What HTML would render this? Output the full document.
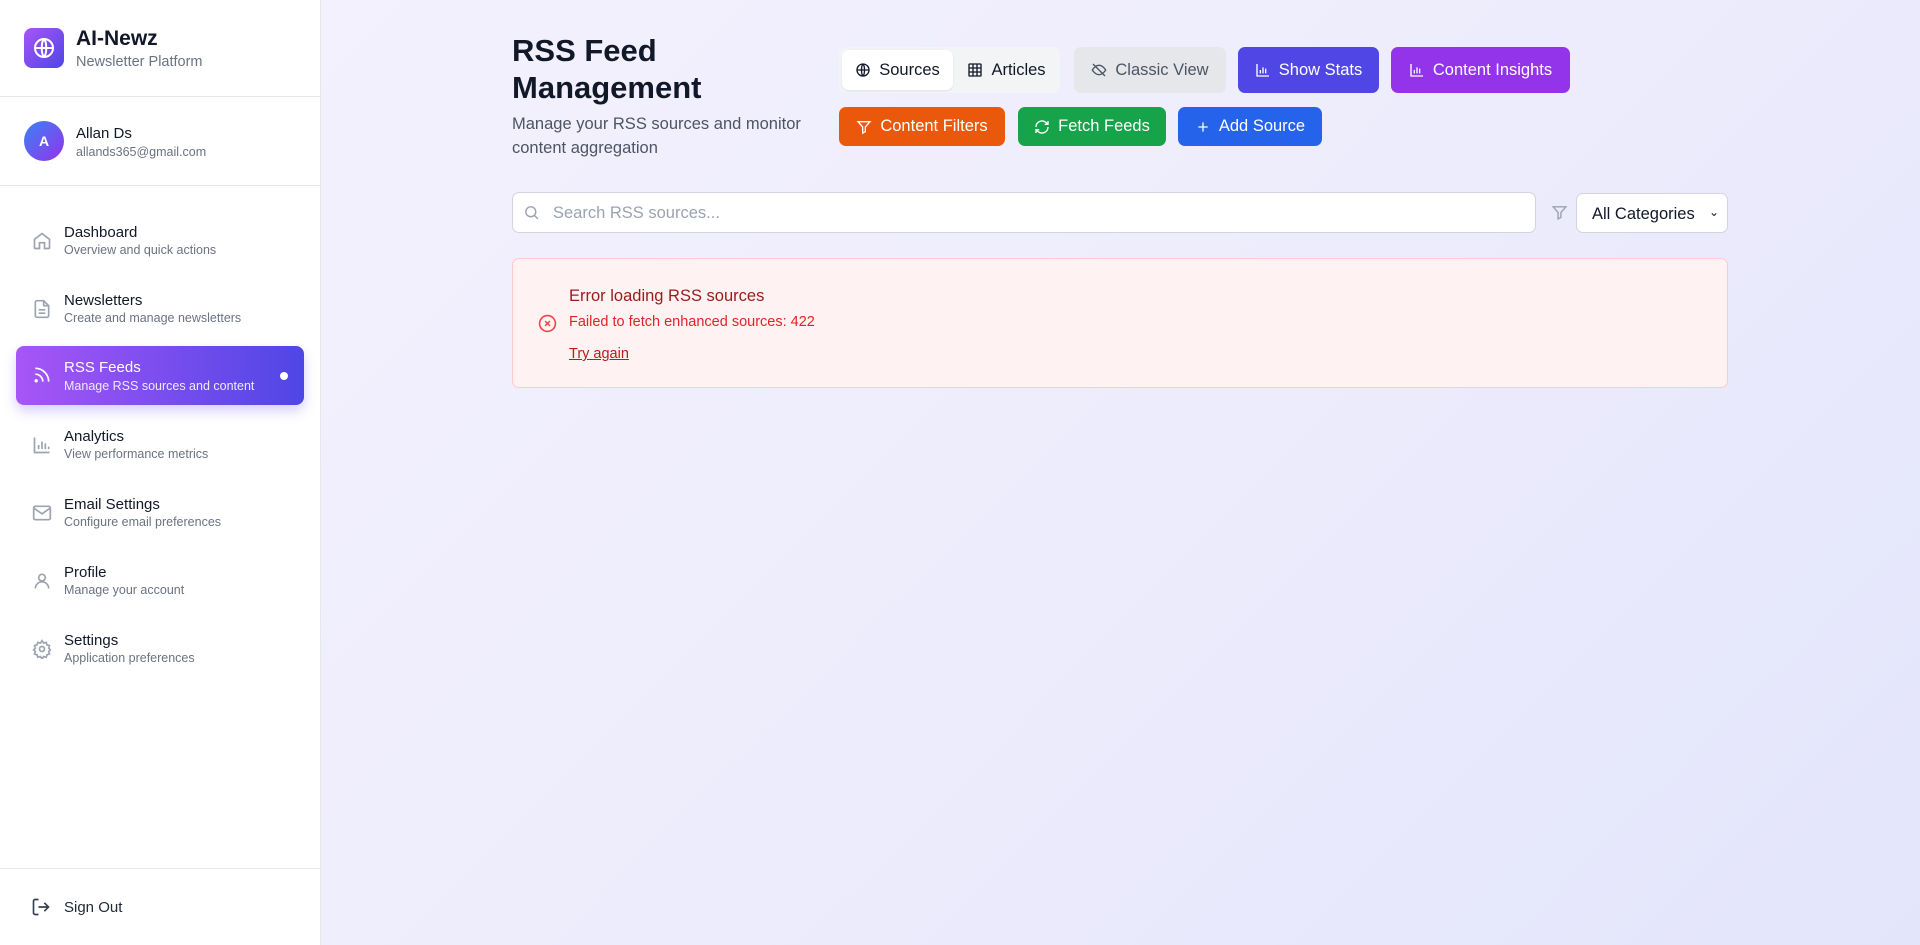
<!DOCTYPE html>
<html><head><meta charset="utf-8"><style>
*{box-sizing:border-box;margin:0;padding:0}
body{width:1920px;height:945px;overflow:hidden;font-family:"Liberation Sans",sans-serif;background:linear-gradient(135deg,#f5f2fe 0%,#eeedfc 50%,#e3e5fb 100%);position:relative;color:#111827}
.sb{position:absolute;left:0;top:0;width:321px;height:945px;background:#fff;border-right:1px solid #e5e7eb}
.abs{position:absolute}
.hr{position:absolute;left:0;width:320px;height:1px;background:#e5e7eb}
.nav{position:absolute;left:16px;width:288px;height:59px}
.nav .t{position:absolute;left:48px;top:12px;font-size:15px;color:#111827}
.nav .s{position:absolute;left:48px;top:31px;font-size:12.5px;color:#6b7280}
.nav svg{position:absolute;left:16px;top:19px}
.btn{position:absolute;height:46px;border-radius:7px;display:flex;align-items:center;justify-content:center;gap:8px;font-size:16.5px;color:#fff}
.b2{height:39px;top:107px}
</style></head><body>
<div class="sb">
 <div class="abs" style="left:24px;top:28px;width:40px;height:40px;border-radius:8px;background:linear-gradient(135deg,#a855f7,#4f46e5);display:flex;align-items:center;justify-content:center">
  <svg width="24" height="24" viewBox="0 0 24 24" fill="none" stroke="#fff" stroke-width="2"><circle cx="12" cy="12" r="9"/><path d="M3 12h18M12 3c3 3 3 15 0 18M12 3c-3 3-3 15 0 18"/></svg></div>
 <div class="abs" style="left:76px;top:27px;font-size:21px;font-weight:bold">AI-Newz</div>
 <div class="abs" style="left:76px;top:54px;font-size:14.5px;color:#6b7280">Newsletter Platform</div>
 <div class="hr" style="top:96px"></div>
 <div class="abs" style="left:24px;top:121px;width:40px;height:40px;border-radius:50%;background:linear-gradient(135deg,#3b82f6,#9333ea);color:#fff;font-weight:bold;font-size:14px;display:flex;align-items:center;justify-content:center">A</div>
 <div class="abs" style="left:76px;top:125px;font-size:15px">Allan Ds</div>
 <div class="abs" style="left:76px;top:145px;font-size:12.5px;color:#6b7280">allands365@gmail.com</div>
 <div class="hr" style="top:185px"></div>

 <div class="nav" style="top:212px"><svg width="20" height="20" viewBox="0 0 24 24" fill="none" stroke="#9ca3af" stroke-width="2"><path d="M3 10l9-7 9 7v10a1 1 0 0 1-1 1h-5v-7H9v7H4a1 1 0 0 1-1-1z"/></svg><div class="t">Dashboard</div><div class="s">Overview and quick actions</div></div>
 <div class="nav" style="top:280px"><svg width="20" height="20" viewBox="0 0 24 24" fill="none" stroke="#9ca3af" stroke-width="2"><path d="M14 2H6a2 2 0 0 0-2 2v16a2 2 0 0 0 2 2h12a2 2 0 0 0 2-2V8z"/><path d="M14 2v6h6M8 13h8M8 17h8"/></svg><div class="t">Newsletters</div><div class="s">Create and manage newsletters</div></div>
 <div class="nav" style="top:346px;border-radius:8px;background:linear-gradient(90deg,#a855f7,#4f46e5);box-shadow:0 6px 12px rgba(99,70,230,.25)"><svg width="20" height="20" viewBox="0 0 24 24" fill="none" stroke="#fff" stroke-width="2"><path d="M4 11a9 9 0 0 1 9 9M4 4a16 16 0 0 1 16 16"/><circle cx="5" cy="19" r="1"/></svg><div class="t" style="color:#fff;top:13px">RSS Feeds</div><div class="s" style="color:#ede9fe;top:33px">Manage RSS sources and content</div><div class="abs" style="right:16px;top:26px;width:8px;height:8px;border-radius:50%;background:#fff"></div></div>
 <div class="nav" style="top:416px"><svg width="20" height="20" viewBox="0 0 24 24" fill="none" stroke="#9ca3af" stroke-width="2"><path d="M3 3v18h18M8 17v-5M12 17V8M16 17v-7M20 17v-3"/></svg><div class="t">Analytics</div><div class="s">View performance metrics</div></div>
 <div class="nav" style="top:484px"><svg width="20" height="20" viewBox="0 0 24 24" fill="none" stroke="#9ca3af" stroke-width="2"><rect x="2" y="4" width="20" height="16" rx="2"/><path d="M2 6l10 7 10-7"/></svg><div class="t">Email Settings</div><div class="s">Configure email preferences</div></div>
 <div class="nav" style="top:552px"><svg width="20" height="20" viewBox="0 0 24 24" fill="none" stroke="#9ca3af" stroke-width="2"><circle cx="12" cy="8" r="4"/><path d="M4 21a8 8 0 0 1 16 0"/></svg><div class="t">Profile</div><div class="s">Manage your account</div></div>
 <div class="nav" style="top:620px"><svg width="20" height="20" viewBox="0 0 24 24" fill="none" stroke="#9ca3af" stroke-width="2"><circle cx="12" cy="12" r="3"/><path d="M12 2l2 3 3-1 1 3 3 1-1 3 2 2-2 2 1 3-3 1-1 3-3-1-2 3-2-3-3 1-1-3-3-1 1-3-2-2 2-2-1-3 3-1 1-3 3 1z"/></svg><div class="t">Settings</div><div class="s">Application preferences</div></div>

 <div class="hr" style="top:868px"></div>
 <svg class="abs" style="left:31px;top:897px" width="20" height="20" viewBox="0 0 24 24" fill="none" stroke="#374151" stroke-width="2"><path d="M9 21H5a2 2 0 0 1-2-2V5a2 2 0 0 1 2-2h4M16 17l5-5-5-5M21 12H9"/></svg>
 <div class="abs" style="left:64px;top:899px;font-size:15px;color:#1f2937">Sign Out</div>
</div>

<div class="abs" style="left:512px;top:32px;font-size:31px;font-weight:bold;line-height:37px;color:#111827">RSS Feed<br>Management</div>
<div class="abs" style="left:512px;top:112px;font-size:16.5px;line-height:24px;color:#4b5563">Manage your RSS sources and monitor<br>content aggregation</div>

<div class="abs" style="left:839px;top:47px;width:221px;height:46px;border-radius:7px;background:#f3f4f6"></div>
<div class="btn" style="left:842px;top:50px;width:111px;height:40px;background:#fff;color:#111827;box-shadow:0 1px 2px rgba(0,0,0,.08)"><svg width="16" height="16" viewBox="0 0 24 24" fill="none" stroke="#111827" stroke-width="2"><circle cx="12" cy="12" r="9"/><path d="M3 12h18M12 3c3 3 3 15 0 18M12 3c-3 3-3 15 0 18"/></svg>Sources</div>
<div class="btn" style="left:955px;top:50px;width:103px;height:40px;color:#111827"><svg width="16" height="16" viewBox="0 0 24 24" fill="none" stroke="#111827" stroke-width="2"><rect x="3" y="3" width="18" height="18" rx="1"/><path d="M3 9h18M3 15h18M9 3v18M15 3v18"/></svg>Articles</div>
<div class="btn" style="left:1074px;top:47px;width:152px;background:#e5e7eb;color:#4b5563"><svg width="16" height="16" viewBox="0 0 24 24" fill="none" stroke="#4b5563" stroke-width="2"><path d="M2 12s4-7 10-7 10 7 10 7-4 7-10 7S2 12 2 12z"/><path d="M3 3l18 18"/></svg>Classic View</div>
<div class="btn" style="left:1238px;top:47px;width:141px;background:#4f46e5"><svg width="16" height="16" viewBox="0 0 24 24" fill="none" stroke="#fff" stroke-width="2"><path d="M3 3v18h18M8 17v-5M12 17V8M16 17v-7"/></svg>Show Stats</div>
<div class="btn" style="left:1391px;top:47px;width:179px;background:#9333ea"><svg width="16" height="16" viewBox="0 0 24 24" fill="none" stroke="#fff" stroke-width="2"><path d="M3 3v18h18M8 17v-5M12 17V8M16 17v-7"/></svg>Content Insights</div>
<div class="btn b2" style="left:839px;width:166px;background:#ea580c"><svg width="16" height="16" viewBox="0 0 24 24" fill="none" stroke="#fff" stroke-width="2"><path d="M3 4h18l-7 8v7l-4 2v-9z"/></svg>Content Filters</div>
<div class="btn b2" style="left:1018px;width:148px;background:#16a34a"><svg width="16" height="16" viewBox="0 0 24 24" fill="none" stroke="#fff" stroke-width="2"><path d="M21 12a9 9 0 0 1-15 6.7L3 16M3 12a9 9 0 0 1 15-6.7L21 8M21 3v5h-5M3 21v-5h5"/></svg>Fetch Feeds</div>
<div class="btn b2" style="left:1178px;width:144px;background:#2563eb"><svg width="16" height="16" viewBox="0 0 24 24" fill="none" stroke="#fff" stroke-width="2"><path d="M12 5v14M5 12h14"/></svg>Add Source</div>

<div class="abs" style="left:512px;top:192px;width:1024px;height:41px;background:#fff;border:1px solid #d1d5db;border-radius:7px"></div>
<svg class="abs" style="left:523px;top:204px" width="17" height="17" viewBox="0 0 24 24" fill="none" stroke="#9ca3af" stroke-width="2"><circle cx="11" cy="11" r="7"/><path d="M21 21l-5-5"/></svg>
<div class="abs" style="left:553px;top:204px;font-size:16.5px;color:#9ca3af">Search RSS sources...</div>
<svg class="abs" style="left:1551px;top:204px" width="17" height="17" viewBox="0 0 24 24" fill="none" stroke="#9ca3af" stroke-width="2"><path d="M3 4h18l-7 8v7l-4 2v-9z"/></svg>
<div class="abs" style="left:1576px;top:193px;width:152px;height:40px;background:#fff;border:1px solid #d1d5db;border-radius:7px;font-size:16.5px;padding:11px 0 0 15px">All Categories<span style="position:absolute;right:8px;top:11px;font-size:12px">&#8964;</span></div>

<div class="abs" style="left:512px;top:258px;width:1216px;height:130px;background:#fef2f2;border:1px solid #fecaca;border-radius:7px"></div>
<svg class="abs" style="left:538px;top:314px" width="19" height="19" viewBox="0 0 24 24" fill="none" stroke="#ef4444" stroke-width="2"><circle cx="12" cy="12" r="10"/><path d="M9 9l6 6M15 9l-6 6"/></svg>
<div class="abs" style="left:569px;top:287px;font-size:16.5px;color:#991b1b">Error loading RSS sources</div>
<div class="abs" style="left:569px;top:314px;font-size:14.5px;color:#dc2626">Failed to fetch enhanced sources: 422</div>
<div class="abs" style="left:569px;top:346px;font-size:14.5px;color:#b91c1c;text-decoration:underline">Try again</div>
</body></html>
